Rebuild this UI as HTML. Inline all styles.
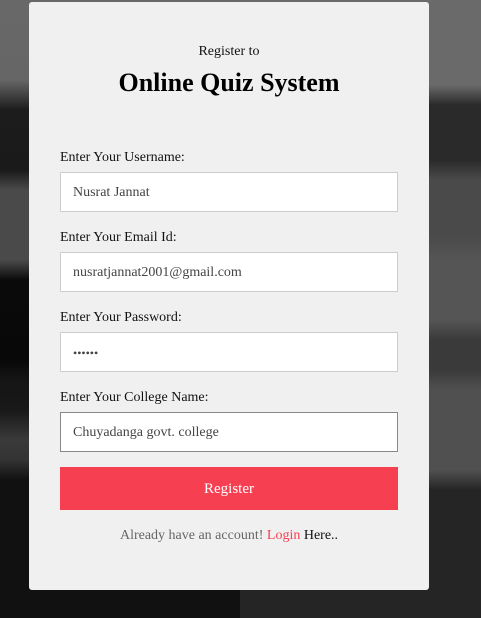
<!DOCTYPE html>
<html><head><style>
html,body{margin:0;padding:0;width:481px;height:618px;overflow:hidden;font-family:"Liberation Serif",serif;}
.bgl{position:absolute;left:0;top:0;width:240px;height:618px;background:linear-gradient(#686868 0,#666 80px,#1c1c1c 110px,#1a1a1a 170px,#4a4a4a 190px,#4a4a4a 260px,#0a0a0a 280px,#080808 360px,#151515 380px,#181818 410px,#3a3a3a 440px,#333 460px,#111 480px,#111 618px);}
.bgr{position:absolute;left:240px;top:0;width:241px;height:618px;background:linear-gradient(#6a6a6a 0,#6a6a6a 85px,#2a2a2a 105px,#2a2a2a 160px,#4a4a4a 180px,#4a4a4a 235px,#555 260px,#555 320px,#3a3a3a 340px,#3a3a3a 370px,#505050 390px,#505050 470px,#252525 490px,#252525 618px);}
.card{position:absolute;left:29px;top:2px;width:400px;height:588px;background:#f0f0f0;border-radius:3px;}
.sub{position:absolute;top:42px;width:400px;text-align:center;font-size:14px;color:#111;}
h1{position:absolute;top:66px;margin:0;width:400px;text-align:center;font-size:26px;font-weight:bold;color:#000;}
.lbl{position:absolute;left:31px;font-size:14px;color:#111;}
.inp{position:absolute;left:31px;width:336px;height:38px;background:#fff;border:1px solid #ccc;box-sizing:content-box;font-size:14px;color:#444;line-height:40px;}
.inp span{margin-left:12px;}
.btn{position:absolute;left:31px;top:465px;width:338px;height:43px;background:#f73f52;color:#fff;text-align:center;line-height:45px;font-size:15px;}
.foot{position:absolute;top:526px;width:400px;text-align:center;font-size:14px;color:#666;}
</style></head><body>
<div class="bgl"></div><div class="bgr"></div>
<div class="card">
<div class="sub">Register to</div>
<h1>Online Quiz System</h1>
<div class="lbl" style="top:148px">Enter Your Username:</div>
<div class="inp" style="top:170px"><span>Nusrat Jannat</span></div>
<div class="lbl" style="top:228px">Enter Your Email Id:</div>
<div class="inp" style="top:250px"><span>nusratjannat2001@gmail.com</span></div>
<div class="lbl" style="top:308px">Enter Your Password:</div>
<div class="inp" style="top:330px"><span style="font-size:12px">••••••</span></div>
<div class="lbl" style="top:388px">Enter Your College Name:</div>
<div class="inp" style="top:410px;border-color:#888"><span>Chuyadanga govt. college</span></div>
<div class="btn">Register</div>
<div class="foot">Already have an account! <span style="color:#f73f52">Login</span> <span style="color:#111">Here..</span></div>
</div>
</body></html>
